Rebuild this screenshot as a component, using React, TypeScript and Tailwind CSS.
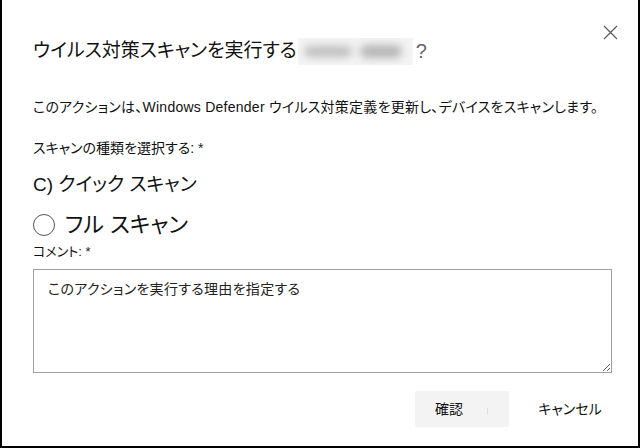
import React from "react";

const ff = "[font-family:'Liberation_Sans','Noto_Sans_CJK_JP',sans-serif] [font-feature-settings:'palt']";

export default function App() {
  return (
    <div className={`relative w-[640px] h-[448px] bg-white border-l-2 border-r-2 border-b-2 border-black text-[#111] ${ff}`}>
      <button className="absolute left-[601px] top-[25px] w-[15px] h-[15px] flex items-center justify-center" aria-label="close">
        <svg width="15" height="15" viewBox="0 0 15 15">
          <path d="M1 1 L14 14 M14 1 L1 14" stroke="#5a5a5a" strokeWidth="1.2" fill="none" />
        </svg>
      </button>
      <div className="flex flex-col pl-[31px] pr-[27px]">
        <div className="mt-[40px] h-[22px] leading-[22px] text-[19px] flex items-center">
          <span>ウイルス対策スキャンを実行する</span>
          <span className="ml-[1px] w-[115px] h-[27px] bg-[#f4f4f4] flex items-center gap-[8px] px-[6px] overflow-hidden">
            <span className="w-[48px] h-[11px] bg-[#bdbdbd] rounded-full blur-[4px]" />
            <span className="w-[42px] h-[13px] bg-[#b5b5b5] rounded-full blur-[4px]" />
          </span>
          <span className="ml-[3px] text-[#666] text-[20px]">?</span>
        </div>
        <div className="mt-[35px] h-[20px] leading-[20px] text-[14px] tracking-[0.25px] whitespace-nowrap">
          このアクションは、Windows Defender ウイルス対策定義を更新し、デバイスをスキャンします。
        </div>
        <div className="mt-[21px] h-[20px] leading-[20px] text-[14px]">
          スキャンの種類を選択する: <span className="text-[#222]">*</span>
        </div>
        <div className="mt-[15px] h-[24px] leading-[24px] text-[19px]">C) クイック スキャン</div>
        <div className="mt-[14px] h-[28px] flex items-center">
          <span className="w-[22px] h-[22px] rounded-full border border-[#555]" />
          <span className="ml-[10px] leading-[28px] text-[22px]">フル スキャン</span>
        </div>
        <div className="mt-[5px] h-[16px] leading-[16px] text-[13px]">
          コメント: <span className="text-[#222]">*</span>
        </div>
        <textarea
          readOnly
          placeholder="このアクションを実行する理由を指定する"
          className="mt-[9px] w-[579px] h-[104px] border border-[#a0a0a0] pl-[14px] pt-[9px] text-[14px] leading-[20px] tracking-[0.3px] placeholder:text-[#222] outline-none"
        />
        <div className="mt-[18px] mr-[-8px] flex justify-end gap-[12px]">
          <button className="w-[94px] h-[36px] bg-[#f3f3f3] rounded-[2px] text-[14px] text-left pl-[20px] flex items-center">
            確認
            <span className="ml-[24px] w-[1px] h-[6px] bg-[#dcdcdc] mt-[4px]" />
          </button>
          <button className="w-[98px] h-[36px] text-[14px] flex items-center justify-center">キャンセル</button>
        </div>
      </div>
    </div>
  );
}
